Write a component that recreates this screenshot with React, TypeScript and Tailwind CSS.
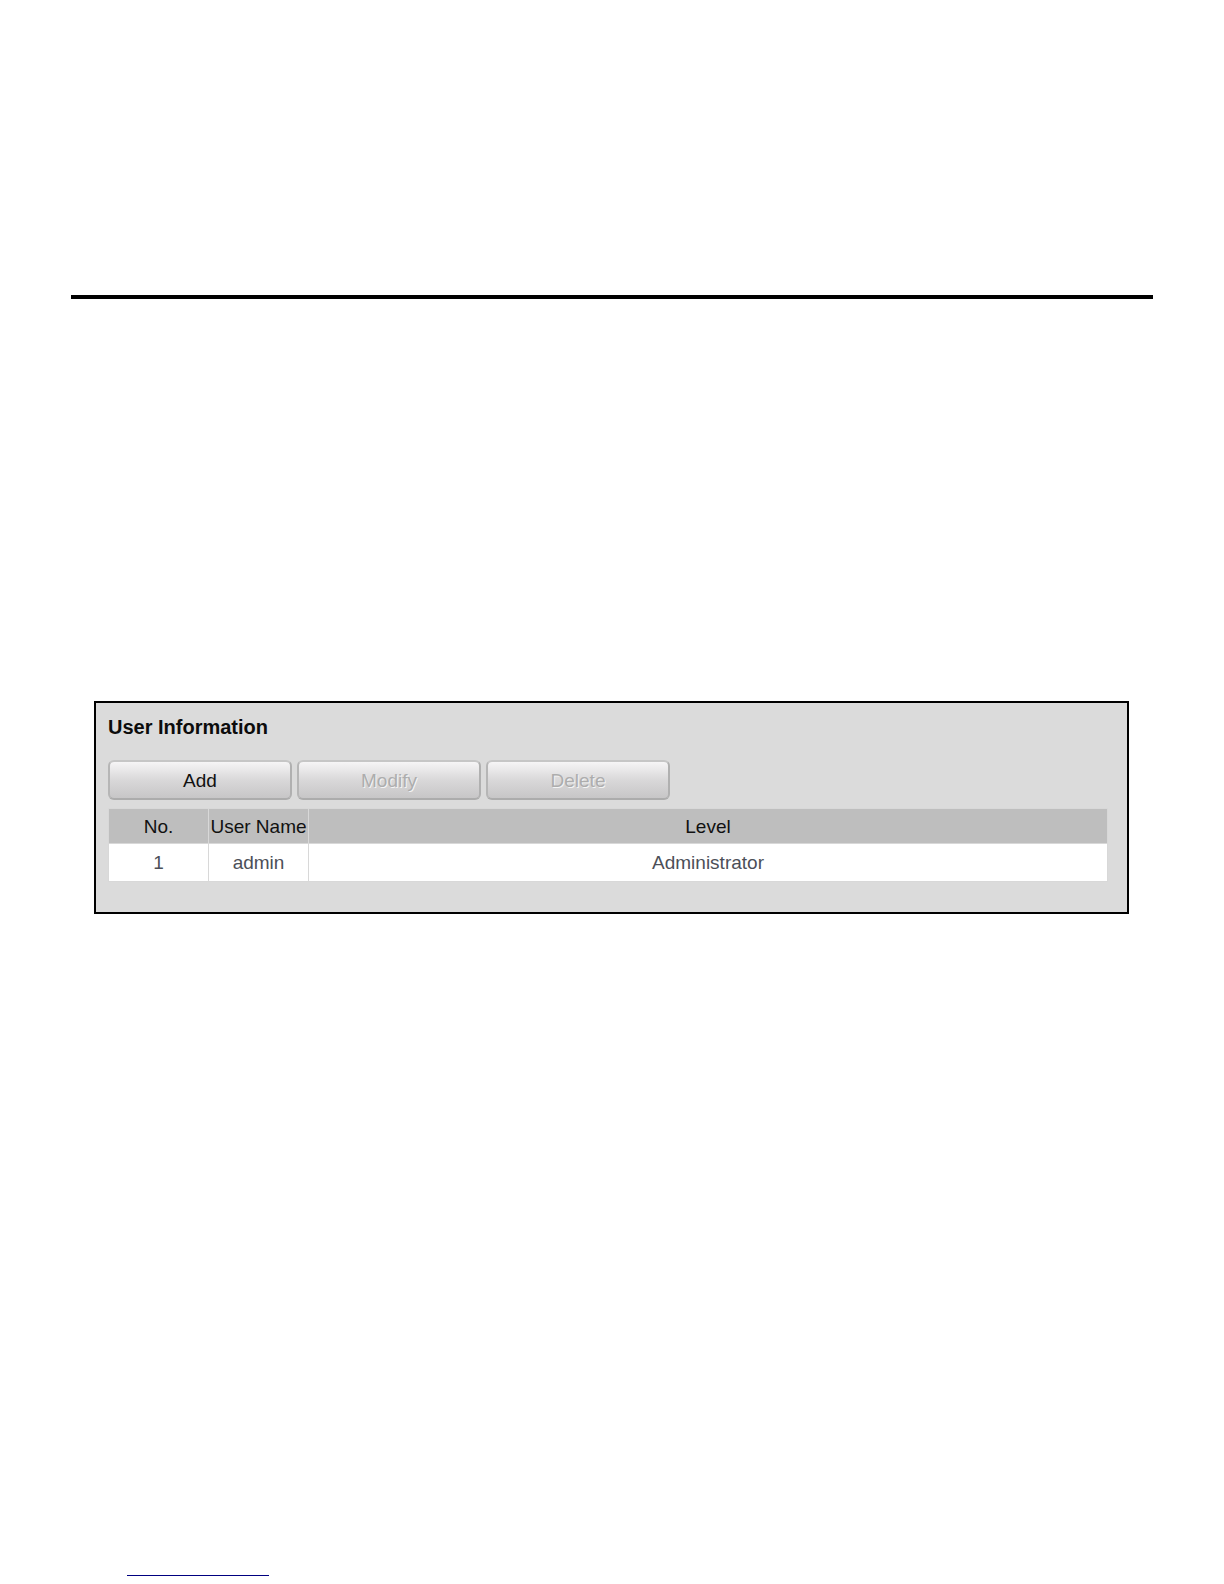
const users = [{ no: 1, name: "admin", level: "Administrator" }];

const actions = [
  { label: "Add", enabled: true },
  { label: "Modify", enabled: false },
  { label: "Delete", enabled: false },
];

function ActionButton({ label, enabled }: { label: string; enabled: boolean }) {
  return (
    <button
      type="button"
      disabled={!enabled}
      className="h-10 w-46 rounded-md border-2 border-t-[#c6c6c6] border-r-[#b0b0b0] border-b-[#acacac] border-l-[#b6b6b6] bg-linear-to-b from-[#f6f5f6] via-[#d9d8d9] to-[#c7c6c7] pt-0.5 text-[19px] leading-6 text-[#111] disabled:text-[#adadad] disabled:[text-shadow:1px_1px_0_#f4f4f4]"
    >
      {label}
    </button>
  );
}

function UserTable() {
  return (
    <table className="w-full table-fixed border-collapse text-center text-[19px] leading-6">
      <colgroup>
        <col className="w-[100px]" />
        <col className="w-[100px]" />
        <col />
      </colgroup>
      <thead>
        <tr className="h-[35px] bg-[#bebebe] text-[#111]">
          <th scope="col" className="border border-[#d8d8d8] p-0 pt-0.5 font-normal">No.</th>
          <th scope="col" className="border border-[#d8d8d8] p-0 pt-0.5 font-normal whitespace-nowrap">User Name</th>
          <th scope="col" className="border border-[#d8d8d8] p-0 pt-0.5 font-normal">Level</th>
        </tr>
      </thead>
      <tbody>
        {users.map((user) => (
          <tr key={user.no} className="h-[38px] bg-white text-[#4c4f58]">
            <td className="border border-[#d8d8d8] p-0">{user.no}</td>
            <td className="border border-[#d8d8d8] p-0">{user.name}</td>
            <td className="border border-[#d8d8d8] p-0">{user.level}</td>
          </tr>
        ))}
      </tbody>
    </table>
  );
}

export default function App() {
  return (
    <div className="flex min-h-screen flex-col bg-white px-[71px] pt-[295px] pb-2 font-['Liberation_Sans',Arial,sans-serif] text-xl">
      <hr className="border-0 border-t-4 border-black" />
      <section
        aria-labelledby="user-information"
        className="mr-6 ml-[23px] mt-[402px] border-2 border-black bg-[#dbdbdb] pt-3 pr-[19px] pb-[30px] pl-3"
      >
        <h1 id="user-information" className="text-xl leading-6 font-bold text-[#0c0c0c]">
          User Information
        </h1>
        <div className="mt-[21px] flex gap-[5px]">
          {actions.map((action) => (
            <ActionButton key={action.label} {...action} />
          ))}
        </div>
        <div className="mt-2">
          <UserTable />
        </div>
      </section>
      <a href="#top" aria-label="Back to top" className="mt-auto ml-14 h-5 w-[142px] border-b border-[#000080]" />
    </div>
  );
}
